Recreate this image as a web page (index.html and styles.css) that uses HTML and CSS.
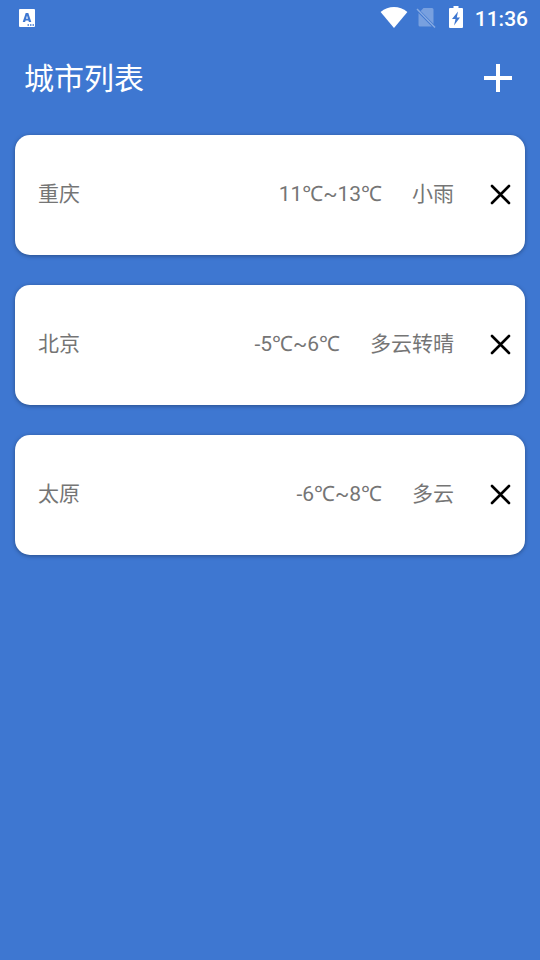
FILE: index.html
```
<!DOCTYPE html>
<html lang="zh-CN">
<head>
<meta charset="utf-8">
<meta name="viewport" content="width=device-width, initial-scale=1">
<title>城市列表</title>
<link rel="stylesheet" href="styles.css">
</head>
<body>
<div class="status">
  <svg class="status-app" width="16" height="18" viewBox="0 0 16 18" aria-hidden="true">
    <rect width="16" height="18" rx="1" fill="#fff"/>
    <path d="M6.700 4h2.600L12.300 13H9.900L9.400 11.400H6.600L6.100 13H3.700ZM8 6.600 7.100 9.700H8.900Z" fill="#3e77d1" fill-rule="evenodd"/>
    <path d="M8.500 16h1.500m1 0h1.500m1 0h1.500" stroke="#3e77d1" stroke-width="1.400"/>
  </svg>
  <div class="status-icons">
    <svg width="28" height="22" viewBox="0 0 28 22" aria-hidden="true">
      <path d="M.6 5C8.500-1.700 19.500-1.700 27.400 5L14 21Z" fill="#fff"/>
    </svg>
    <svg width="20" height="22" viewBox="0 0 20 22" aria-hidden="true">
      <path d="M7.500 1H16Q17.500 1 17.500 2.500V16.900L4.700 3.900ZM2.500 6 15.800 19.500H4Q2.500 19.500 2.500 18Z" fill="#fff" opacity=".3"/>
      <path d="M1 2 19 20.500" stroke="#fff" stroke-width="1.500" opacity=".38"/>
    </svg>
    <svg width="14" height="22" viewBox="0 0 14 22" aria-hidden="true">
      <path d="M4.500-1h5v2H13q1 0 1 1v18q0 1-1 1H1q-1 0-1-1V2q0-1 1-1h3.500Z" fill="#fff"/>
      <path d="M9 4.500 3 12h3.500L5 18.500 11 10.500H7.800Z" fill="#3e77d1"/>
    </svg>
  </div>
  <time class="clock">11:36</time>
</div>
<header class="bar">
  <h1 class="title">城市列表</h1>
  <button class="icon-button" type="button" aria-label="添加城市">
    <svg width="28" height="28" viewBox="0 0 28 28"><path d="M14 0v28M0 14h28" stroke="#fff" stroke-width="4"/></svg>
  </button>
</header>
<main>
  <ul class="cities">
    <li class="card">
      <span class="city">重庆</span>
      <span class="range">11℃~13℃</span>
      <span class="weather">小雨</span>
      <button class="icon-button" type="button" aria-label="删除重庆">
        <svg width="20" height="20" viewBox="0 0 20 20"><path d="M2 2l17 17m0-17-17 17" stroke="#000" stroke-width="2.600" stroke-linecap="round"/></svg>
      </button>
    </li>
    <li class="card">
      <span class="city">北京</span>
      <span class="range">-5℃~6℃</span>
      <span class="weather">多云转晴</span>
      <button class="icon-button" type="button" aria-label="删除北京">
        <svg width="20" height="20" viewBox="0 0 20 20"><path d="M2 2l17 17m0-17-17 17" stroke="#000" stroke-width="2.600" stroke-linecap="round"/></svg>
      </button>
    </li>
    <li class="card">
      <span class="city">太原</span>
      <span class="range">-6℃~8℃</span>
      <span class="weather">多云</span>
      <button class="icon-button" type="button" aria-label="删除太原">
        <svg width="20" height="20" viewBox="0 0 20 20"><path d="M2 2l17 17m0-17-17 17" stroke="#000" stroke-width="2.600" stroke-linecap="round"/></svg>
      </button>
    </li>
  </ul>
</main>
</body>
</html>
```
FILE: styles.css
```
* {
  box-sizing: border-box;
}

body {
  margin: 0;
  min-height: 100vh;
  background: #3e77d1;
  font-family: Roboto, "Noto Sans CJK SC", sans-serif;
}

svg {
  display: block;
  overflow: visible;
}

.status {
  display: flex;
  align-items: center;
  justify-content: space-between;
  height: 36px;
  padding: 0 12px 0 19px;
  color: #fff;
}

.status-icons {
  display: flex;
  align-items: center;
  gap: 8px;
  margin-left: auto;
  margin-right: 12px;
}

.status-icons svg:last-child {
  margin-left: 5px;
}

.clock {
  padding-top: 2px;
  font-size: 21px;
  font-weight: 500;
  line-height: 36px;
}

.bar {
  display: flex;
  align-items: center;
  justify-content: space-between;
  height: 84px;
  padding: 0 28px 0 24px;
}

.title {
  margin: 0;
  padding-top: 2px;
  color: #fff;
  font-size: 30px;
  font-weight: 400;
  line-height: 42px;
}

.icon-button {
  padding: 0;
  border: 0;
  background: none;
  cursor: pointer;
}

.cities {
  display: flex;
  flex-direction: column;
  gap: 30px;
  margin: 0;
  padding: 15px;
  list-style: none;
}

.card {
  display: flex;
  align-items: center;
  height: 120px;
  padding: 0 15px 2px 23px;
  border-radius: 15px;
  background: #fff;
  box-shadow: 0 1px 4px rgba(0, 0, 0, 0.35);
  color: #757575;
  font-size: 21px;
  line-height: 30px;
}

.range {
  margin-left: auto;
  font-family: Roboto, "Noto Sans", "Noto Sans CJK SC", sans-serif;
}

.weather {
  margin: 0 36px 0 30px;
}
```
